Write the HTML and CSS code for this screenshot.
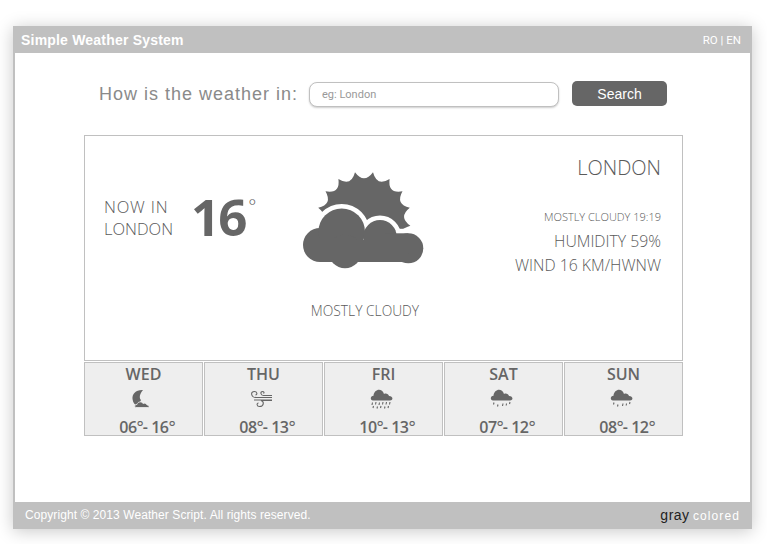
FILE: index.html
```html
<!DOCTYPE html>
<html lang="en">
<head>
<meta charset="utf-8">
<title>Simple Weather System</title>
<link rel="stylesheet" href="styles.css">
</head>
<body>
<div class="shell">
  <header class="topbar">
    <h1 class="brand">Simple Weather System</h1>
    <div class="lang">RO | EN</div>
  </header>
  <main class="content">
    <form class="search">
      <label class="search-label" for="city">How is the weather in:</label>
      <input class="search-input" id="city" type="text" placeholder="eg: London">
      <button class="search-btn" type="button">Search</button>
    </form>
    <section class="now">
      <div class="now-left">
        <div class="now-caption"><span class="now-caption-top">NOW IN</span><br>LONDON</div>
        <div class="now-temp">16<span class="now-deg">°</span></div>
      </div>
      <div class="now-center">
        <svg class="big-icon" viewBox="0 0 150 120" width="150" height="120" aria-hidden="true">
          <defs>
            <g id="bigcloud">
              <circle cx="35" cy="85" r="17"/>
              <circle cx="56.7" cy="71.7" r="23.3"/>
              <circle cx="60" cy="91.500" r="16.700"/>
              <circle cx="95" cy="76.7" r="16.7"/>
              <circle cx="123.3" cy="88.3" r="15"/>
              <rect x="35" y="80" width="88" height="22"/>
              <rect x="100" y="73.300" width="23.300" height="20"/>
            </g>
          </defs>
          <path class="ink" d="M70 12.200 Q79 24.300 88 12.200 Q91.800 26.800 104.600 18.900 Q102.600 33.900 117.500 31.300 Q110.100 44.500 124.800 47.700 Q113 57.100 125.400 65.700 Q111 70 116 78 L79 90 L42 78 Q47 70 32.600 65.700 Q45 57.100 33.200 47.700 Q47.900 44.500 40.500 31.300 Q55.400 33.900 53.400 18.900 Q66.200 26.800 70 12.200 Z"/>
          <use href="#bigcloud" class="halo"/>
          <use href="#bigcloud" class="ink"/>
        </svg>
        <div class="now-cond">MOSTLY CLOUDY</div>
      </div>
      <div class="now-right">
        <div class="city">LONDON</div>
        <div class="stamp">MOSTLY CLOUDY 19:19</div>
        <div class="stat">HUMIDITY 59%</div>
        <div class="stat">WIND 16 KM/HWNW</div>
      </div>
    </section>
    <section class="days">
      <article class="day">
        <div class="day-name">WED</div>
        <svg class="day-icon" viewBox="-1 0 39 30" width="39" height="30" aria-hidden="true">
          <path class="ink" d="M18 5 C11 4.500 7 9 7.500 14 C8 18 10 20 13 21 L16 15 C14 13 14.500 9 18 5 Z"/>
          <path class="ink small-halo" d="M11 22.500 C9 22.500 9.500 19 12 19.500 C12.500 16.500 17 16 18 18.500 C20 17.500 22 19 22 20 C24 20 25 22.500 23 22.500 Z"/>
        </svg>
        <div class="day-temp">06<span class="d">°</span>- 16<span class="d">°</span></div>
      </article>
      <article class="day">
        <div class="day-name">THU</div>
        <svg class="day-icon" viewBox="-1 0 39 30" width="39" height="30" aria-hidden="true">
          <path class="wind" d="M27 12.500 H11 C6 12.500 5 6.500 9.500 6.500 C12 6.500 12.800 9.500 10.500 10"/>
          <path class="wind" d="M27 10.500 H18.500 C15.500 10.500 15 6.500 17.500 6.500 C19 6.500 19.500 8 18.500 8.500"/>
          <path class="wind" d="M27 15 H9 M27 15.500 H16 C19.500 16.500 19 21.500 14.500 21.500 C11.500 21.500 11.500 18 13.500 18"/>
        </svg>
        <div class="day-temp">08<span class="d">°</span>- 13<span class="d">°</span></div>
      </article>
      <article class="day">
        <div class="day-name">FRI</div>
        <svg class="day-icon" viewBox="2 0 39 30" width="39" height="30" aria-hidden="true">
          <path class="ink" d="M11 15.500 C8 15.500 8 11 11.500 10.800 C12 4 20 2.500 22 9 C24 8 26.500 9 27 11 C31 10.800 31.800 15.500 28 15.500 Z"/>
          <path class="drops" d="M10.500 17.500 l-.5 2.500 M14 17 l-.5 2.500 M17.500 17.500 l-.5 2.500 M21 17 l-.5 2.500 M24.500 17 l-.5 2.500 M28 17 l-.5 2.500 M11.500 21 l-.5 2 M15.500 21.500 l-.5 2 M19 21 l-.5 2 M23 21.500 l-.5 2 M26.500 21 l-.5 2"/>
        </svg>
        <div class="day-temp">10<span class="d">°</span>- 13<span class="d">°</span></div>
      </article>
      <article class="day">
        <div class="day-name">SAT</div>
        <svg class="day-icon" viewBox="2 0 39 30" width="39" height="30" aria-hidden="true">
          <path class="ink" d="M11 15.500 C8 15.500 8 11 11.500 10.800 C12 4 20 2.500 22 9 C24 8 26.500 9 27 11 C31 10.800 31.800 15.500 28 15.500 Z"/>
          <path class="drops" d="M12 17.500 l-.5 2 M16 19.500 l-.5 2 M21 18.500 l-.5 2.500 M24.500 18.500 l-.3 2 M28 17 l-.5 2"/>
        </svg>
        <div class="day-temp">07<span class="d">°</span>- 12<span class="d">°</span></div>
      </article>
      <article class="day">
        <div class="day-name">SUN</div>
        <svg class="day-icon" viewBox="2 0 39 30" width="39" height="30" aria-hidden="true">
          <path class="ink" d="M11 15.500 C8 15.500 8 11 11.500 10.800 C12 4 20 2.500 22 9 C24 8 26.500 9 27 11 C31 10.800 31.800 15.500 28 15.500 Z"/>
          <path class="drops" d="M12 17.500 l-.5 2 M16 19.500 l-.5 2 M21 18.500 l-.5 2.500 M24.500 18.500 l-.3 2 M28 17 l-.5 2"/>
        </svg>
        <div class="day-temp">08<span class="d">°</span>- 12<span class="d">°</span></div>
      </article>
    </section>
  </main>
  <footer class="footbar">
    <div class="copy">Copyright © 2013 Weather Script. All rights reserved.</div>
    <div class="theme"><span class="theme-on">gray</span> <span class="theme-off">colored</span></div>
  </footer>
</div>
</body>
</html>
```
FILE: styles.css
```css
* { box-sizing: border-box; }
html, body { margin: 0; padding: 0; background: #fff; }
body { height: 544px; overflow: hidden; padding: 26px 15px 0 13px; }

.shell {
  width: 739px;
  height: 503px;
  display: flex;
  flex-direction: column;
  background: #fff;
  border-left: 2px solid #c0c0c0;
  border-right: 2px solid #c0c0c0;
  box-shadow: 0 2px 16px rgba(0, 0, 0, .22);
  font-family: "Liberation Sans", Arial, sans-serif;
}

.topbar {
  height: 27px;
  flex: none;
  margin: 0 -2px;
  padding: 0 9px 0 8px;
  background: #c0c0c0;
  color: #fff;
  display: flex;
  align-items: center;
  justify-content: space-between;
}
.brand { margin: 0; font-size: 14px; font-weight: 700; letter-spacing: .2px; }
.lang { font-family: Roboto, sans-serif; font-size: 11.500px; padding-right: 2px; }

.content { flex: 1; padding: 28px 0 0 69px; }

.search { display: flex; align-items: center; height: 26px; padding-left: 15px; }
.search-label { font-size: 18px; letter-spacing: 1px; color: #8a8a8a; width: 210px; flex: none; }
.search-input {
  width: 250px;
  height: 25px;
  margin-top: 1px;
  padding: 0 12px;
  border: 1px solid #c0c0c0;
  border-radius: 8px;
  box-shadow: 0 1px 2px rgba(0, 0, 0, .2);
  font-family: Roboto, sans-serif;
  font-size: 11px;
  outline: none;
}
.search-input::placeholder { color: #999; opacity: 1; }
.search-btn {
  width: 95px;
  height: 25px;
  margin: 0 0 1px 13px;
  padding: 0;
  border: 0;
  border-radius: 5px;
  background: #666;
  color: #fff;
  font-family: "Liberation Sans", Arial, sans-serif;
  font-size: 14px;
}

.now {
  width: 599px;
  height: 226px;
  margin-top: 28px;
  border: 1px solid #c0c0c0;
  display: flex;
  font-family: "Open Sans", sans-serif;
  color: #5a5a5a;
}
.now-left { width: 205px; flex: none; display: flex; align-items: flex-start; padding: 52px 0 0 19px; }
.now-caption { width: 87px; font-size: 16.500px; font-weight: 300; line-height: 22px; padding-top: 8px; }
.now-caption-top { letter-spacing: .8px; }
.now-temp { color: #666; font-size: 51px; font-weight: 700; line-height: 56px; letter-spacing: -2px; display: flex; }
.now-deg { font-size: 19px; font-weight: 300; line-height: 26px; margin: 5px 0 0 3px; }

.now-center { width: 150px; flex: none; padding: 24px 0 0; display: flex; flex-direction: column; align-items: center; }
.big-icon { display: block; flex: none; margin-left: -10px; }
.ink { fill: #666; }
.halo { fill: #fff; stroke: #fff; stroke-width: 9; }
.now-cond { margin-top: 22px; font-size: 13.800px; font-weight: 300; line-height: 18px; white-space: nowrap; }

.now-right { flex: 1; padding: 18px 21px 0 0; text-align: right; }
.city { font-size: 20px; font-weight: 300; line-height: 28px; }
.stamp { margin: 27px 0 4px; font-size: 11px; font-weight: 300; line-height: 16px; }
.stat { font-size: 15.800px; font-weight: 300; line-height: 24px; }

.days { width: 599px; margin-top: 1px; display: flex; gap: 1px; font-family: "Open Sans", sans-serif; color: #666; }
.day {
  width: 119px;
  height: 74px;
  flex: none;
  background: #eee;
  border: 1px solid #c0c0c0;
  display: flex;
  flex-direction: column;
  align-items: center;
}
.day-name { font-size: 16px; font-weight: 600; line-height: 22px; height: 22px; }
.day-icon { display: block; flex: none; }
.small-halo { stroke: #eee; stroke-width: .8; }
.wind { fill: none; stroke: #666; stroke-width: 1.1; }
.drops { fill: none; stroke: #666; stroke-width: 1.1; }
.day-temp { font-size: 16px; font-weight: 600; line-height: 20px; margin-top: 2px; padding-left: 7px; letter-spacing: -.5px; white-space: nowrap; }
.d { font-weight: 400; font-size: 17px; letter-spacing: -1px; }

.footbar {
  height: 27px;
  flex: none;
  margin: 0 -2px;
  padding: 0 12px 2px 12px;
  background: #c0c0c0;
  color: #fff;
  display: flex;
  align-items: center;
  justify-content: space-between;
}
.copy { font-size: 12px; letter-spacing: .08px; }
.theme { font-size: 12px; }
.theme-on { color: #222; font-size: 14px; letter-spacing: .5px; }
.theme-off { color: #fff; letter-spacing: 1.1px; }
```
